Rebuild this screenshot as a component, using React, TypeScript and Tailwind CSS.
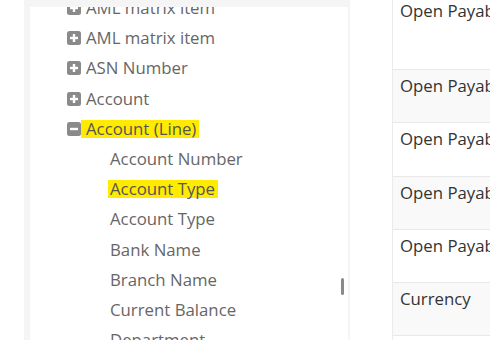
import React from "react";

type Item = { label: string; kind: "plus" | "minus" | "child"; hl?: boolean };

const items: Item[] = [
  { label: "AML matrix item", kind: "plus" },
  { label: "AML matrix item", kind: "plus" },
  { label: "ASN Number", kind: "plus" },
  { label: "Account", kind: "plus" },
  { label: "Account (Line)", kind: "minus", hl: true },
  { label: "Account Number", kind: "child" },
  { label: "Account Type", kind: "child", hl: true },
  { label: "Account Type", kind: "child" },
  { label: "Bank Name", kind: "child" },
  { label: "Branch Name", kind: "child" },
  { label: "Current Balance", kind: "child" },
  { label: "Department", kind: "child" },
];

const rows = [
  { text: "Open Payables", cls: "h-[75px] bg-white" },
  { text: "Open Payables", cls: "h-[53px] bg-[#f9f9f9]" },
  { text: "Open Payables", cls: "h-[54px] bg-white" },
  { text: "Open Payables", cls: "h-[53px] bg-[#f9f9f9]" },
  { text: "Open Payables", cls: "h-[53px] bg-white" },
  { text: "Currency", cls: "h-[53px] bg-[#f9f9f9]" },
  { text: "", cls: "h-[53px] bg-white" },
];

function Icon({ minus }: { minus?: boolean }) {
  return (
    <svg width="14" height="14" viewBox="0 0 14 14" className="shrink-0">
      <rect x="0" y="0" width="14" height="14" rx="2.5" fill="#8a8a8a" />
      <line x1="3" y1="7" x2="11" y2="7" stroke="#fff" strokeWidth="2.4" />
      {!minus && <line x1="7" y1="3" x2="7" y2="11" stroke="#fff" strokeWidth="2.4" />}
    </svg>
  );
}

export default function App() {
  return (
    <div
      className="w-[490px] h-[340px] overflow-hidden bg-white flex"
      style={{ fontFamily: '"Open Sans", sans-serif' }}
    >
      <div className="w-[24px] shrink-0 bg-white" />
      <div className="w-[326px] shrink-0 bg-[#f5f5f5] pl-[6px] pt-[7px] pr-[2px] flex">
        <div className="relative flex-1 bg-white overflow-hidden">
          <div className="mt-[-14px]">
            {items.map((it, i) => (
              <div key={i} className="h-[30.2px] flex items-center text-[16.8px] text-[#666]">
                {it.kind === "child" ? (
                  <span
                    className={`ml-[78px] pl-[2px] pr-[3px] inline-block leading-[18px] ${
                      it.hl ? "bg-[#ffeb00] text-[#555]" : ""
                    }`}
                  >
                    {it.label}
                  </span>
                ) : (
                  <div className="ml-[37px] flex items-center">
                    <Icon minus={it.kind === "minus"} />
                    <span
                      className={`pl-[5px] pr-[3px] inline-block leading-[18px] ${
                        it.hl ? "bg-[#ffeb00] text-[#555]" : ""
                      }`}
                    >
                      {it.label}
                    </span>
                  </div>
                )}
              </div>
            ))}
          </div>
          <div className="absolute left-[311px] top-[271px] w-[3px] h-[17px] rounded-full bg-[#8a8a8a]" />
        </div>
      </div>
      <div className="w-[42px] shrink-0 bg-white" />
      <div className="flex-1 border-l border-[#ebebeb] mt-[-5px] min-w-0">
        {rows.map((r, i) => (
          <div
            key={i}
            className={`${r.cls} border-b border-[#e8e8e8] pl-[7px] pt-[4px] text-[16.8px] leading-[24px] text-[#333] whitespace-nowrap`}
          >
            {r.text}
          </div>
        ))}
      </div>
    </div>
  );
}
